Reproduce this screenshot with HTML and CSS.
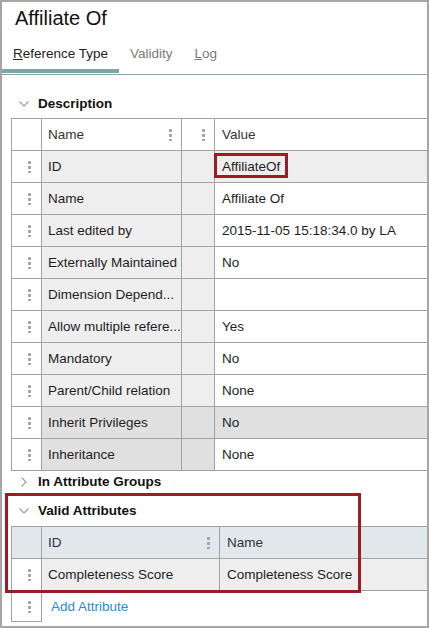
FILE: index.html
```html
<!DOCTYPE html>
<html>
<head>
<meta charset="utf-8">
<link rel="stylesheet" href="styles.css">
</head>
<body>
<div class="frame">
  <div class="title">Affiliate Of</div>
  <div class="tabs">
    <div class="tab active"><u>R</u>eference Type</div>
    <div class="tab">Validity</div>
    <div class="tab"><u>L</u>og</div>
  </div>

  <div class="sec">
    <span class="chev"><svg width="10" height="6" viewBox="0 0 10 6"><path d="M0.5 0.5 L5 5 L9.5 0.5" fill="none" stroke="#9a9a9a" stroke-width="1.1"/></svg></span>
    <span class="sec-title">Description</span>
  </div>

  <div class="grid desc">
    <div class="row head">
      <div class="c c1"></div>
      <div class="c c2"><span>Name</span><i class="dots"></i></div>
      <div class="c c3 dotonly"><i class="dots"></i></div>
      <div class="c c4"><span>Value</span></div>
    </div>
    <div class="row sel">
      <div class="c c1"><i class="dots"></i></div>
      <div class="c c2">ID</div>
      <div class="c c3"></div>
      <div class="c c4">AffiliateOf<span class="mark"></span></div>
    </div>
    <div class="row">
      <div class="c c1"><i class="dots"></i></div>
      <div class="c c2">Name</div>
      <div class="c c3"></div>
      <div class="c c4">Affiliate Of</div>
    </div>
    <div class="row">
      <div class="c c1"><i class="dots"></i></div>
      <div class="c c2">Last edited by</div>
      <div class="c c3"></div>
      <div class="c c4">2015-11-05 15:18:34.0 by LA</div>
    </div>
    <div class="row">
      <div class="c c1"><i class="dots"></i></div>
      <div class="c c2">Externally Maintained</div>
      <div class="c c3"></div>
      <div class="c c4">No</div>
    </div>
    <div class="row">
      <div class="c c1"><i class="dots"></i></div>
      <div class="c c2">Dimension Depend...</div>
      <div class="c c3"></div>
      <div class="c c4"></div>
    </div>
    <div class="row">
      <div class="c c1"><i class="dots"></i></div>
      <div class="c c2">Allow multiple refere...</div>
      <div class="c c3"></div>
      <div class="c c4">Yes</div>
    </div>
    <div class="row">
      <div class="c c1"><i class="dots"></i></div>
      <div class="c c2">Mandatory</div>
      <div class="c c3"></div>
      <div class="c c4">No</div>
    </div>
    <div class="row">
      <div class="c c1"><i class="dots"></i></div>
      <div class="c c2">Parent/Child relation</div>
      <div class="c c3"></div>
      <div class="c c4">None</div>
    </div>
    <div class="row dark hl">
      <div class="c c1"><i class="dots"></i></div>
      <div class="c c2">Inherit Privileges</div>
      <div class="c c3"></div>
      <div class="c c4">No</div>
    </div>
    <div class="row dark">
      <div class="c c1"><i class="dots"></i></div>
      <div class="c c2">Inheritance</div>
      <div class="c c3"></div>
      <div class="c c4">None</div>
    </div>
  </div>

  <div class="sec small">
    <span class="chev"><svg width="6" height="10" viewBox="0 0 6 10"><path d="M0.5 0.5 L5 5 L0.5 9.5" fill="none" stroke="#9a9a9a" stroke-width="1.1"/></svg></span>
    <span class="sec-title">In Attribute Groups</span>
  </div>

  <div class="sec va">
    <span class="chev"><svg width="10" height="6" viewBox="0 0 10 6"><path d="M0.5 0.5 L5 5 L9.5 0.5" fill="none" stroke="#9a9a9a" stroke-width="1.1"/></svg></span>
    <span class="sec-title">Valid Attributes</span>
  </div>

  <div class="grid attrs">
    <div class="row head blue">
      <div class="c c1"></div>
      <div class="c c2"><span>ID</span><i class="dots"></i></div>
      <div class="c c3"><span>Name</span></div>
    </div>
    <div class="row">
      <div class="c c1"><i class="dots"></i></div>
      <div class="c c2">Completeness Score</div>
      <div class="c c3">Completeness Score</div>
    </div>
  </div>
  <div class="add">
    <div class="add-handle"><i class="dots"></i></div>
    <a class="add-link">Add Attribute</a>
  </div>

  <div class="callout"></div>
</div>
</body>
</html>
```
FILE: styles.css
```css
* { box-sizing: border-box; }
html, body { margin: 0; padding: 0; background: #fff; }
body {
  font-family: "Liberation Sans", Arial, sans-serif;
  font-size: 13.5px;
  color: #1e1e1e;
}
.frame {
  position: relative;
  width: 429px;
  height: 628px;
  border: 2px solid #a6a6a6;
  overflow: hidden;
}
.title {
  font-size: 20px;
  line-height: 24px;
  padding: 4px 0 0 13px;
  color: #111;
}
.tabs {
  display: flex;
  padding-bottom: 1px;
  border-bottom: 1px solid #84a7ae;
  height: 45px;
  align-items: flex-end;
}
.tab {
  padding: 0 11px 7px;
  line-height: 16px;
  color: #7a7a7a;
  border-bottom: 4px solid transparent;
}
.tab u { text-decoration: underline; text-underline-offset: 1px; }
.tab.active { color: #222; border-bottom-color: #7fa3ab; }

.sec {
  display: flex;
  align-items: center;
  height: 28px;
  margin-top: 15px;
  padding-left: 17px;
  font-weight: bold;
  line-height: 16px;
  color: #111;
}
.chev {
  width: 10px;
  height: 10px;
  display: flex;
  align-items: center;
  justify-content: center;
  margin-right: 9px;
}
.sec.small { height: 22px; margin-top: 0; }
.sec.va { height: 30px; margin-top: 3px; }

.grid {
  margin-left: 9px;
  border-top: 1px solid #a2a2a2;
  border-left: 1px solid #a2a2a2;
}
.row {
  display: grid;
  height: 32px;
  border-bottom: 1px solid #a2a2a2;
}
.desc .row { grid-template-columns: 30px 140px 33px 1fr; }
.attrs .row { grid-template-columns: 30px 178px 1fr; }
.c {
  display: flex;
  align-items: center;
  white-space: nowrap;
  overflow: hidden;
  line-height: 16px;
  border-right: 1px solid #a2a2a2;
}
.c:last-child { border-right: none; }
.c1 { justify-content: flex-end; padding-right: 10px; background: #fff; }
.c2 { padding-left: 6px; background: #eeeeee; }
.c3 { background: #eeeeee; }
.c4 { padding-left: 7px; background: #fff; position: relative; overflow: visible; }
.attrs .c3 { padding-left: 7px; }

.head .c { background: #fff; color: #333; }
.head .c2 { justify-content: space-between; padding-right: 9px; }
.head .c3.dotonly { justify-content: flex-end; padding-right: 9px; }
.head.blue .c { background: #e1e8eb; }

.sel .c4 { background: #eeeeee; }
.dark .c2, .dark .c3 { background: #e0e0e0; }
.hl .c4 { background: #e0e0e0; }

.dots {
  display: block;
  width: 3px;
  height: 13px;
  background:
    radial-gradient(circle, #a4a4a4 1.4px, transparent 1.6px) 0 0 / 3px 5px repeat-y;
}

.mark {
  position: absolute;
  left: -1px;
  top: 2px;
  width: 74px;
  height: 25px;
  border: 3px solid #9d1b23;
}

.add {
  display: flex;
  align-items: center;
  margin-left: 9px;
  height: 31px;
}
.add-handle {
  width: 31px;
  height: 31px;
  border-left: 1px solid #a2a2a2;
  border-right: 1px solid #a2a2a2;
  border-bottom: 1px solid #a2a2a2;
  display: flex;
  align-items: center;
  justify-content: flex-end;
  padding-right: 10px;
}
.add-link {
  color: #2a8cd3;
  padding-left: 9px;
  line-height: 16px;
}

.callout {
  position: absolute;
  left: 3px;
  top: 491px;
  width: 356px;
  height: 100px;
  border: 3px solid #9d1b23;
  pointer-events: none;
}
```
